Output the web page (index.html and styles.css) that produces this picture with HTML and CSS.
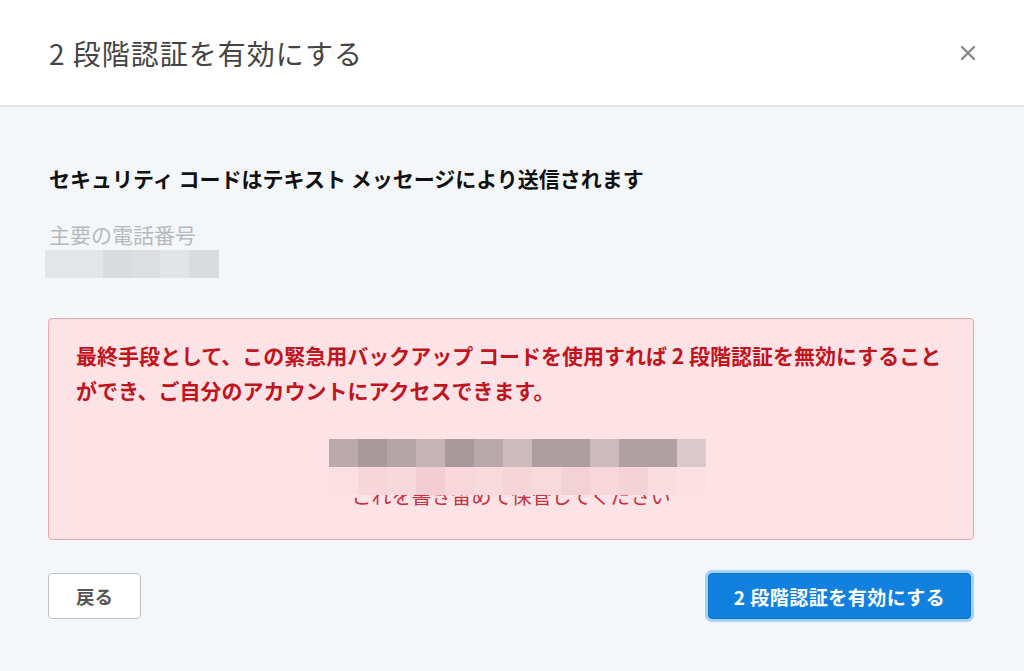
FILE: index.html
```html
<!DOCTYPE html>
<html lang="ja">
<head>
<meta charset="utf-8">
<link rel="stylesheet" href="styles.css">
</head>
<body>
<div class="modal">
  <header class="header">
    <h1 class="title">2 段階認証を有効にする</h1>
    <button class="close" aria-label="閉じる">
      <svg width="16" height="16" viewBox="0 0 16 16"><path d="M2 2L14 14M14 2L2 14" stroke="#858789" stroke-width="2.4" stroke-linecap="round"/></svg>
    </button>
  </header>
  <main class="content">
    <p class="lead">セキュリティ コードはテキスト メッセージにより送信されます</p>
    <p class="label">主要の電話番号</p>
    <div class="phone">
      <span class="pc c1"></span><span class="pc c2"></span><span class="pc c3"></span><span class="pc c4"></span><span class="pc c5"></span>
    </div>
    <div class="alert">
      <p class="alert-text">最終手段として、この緊急用バックアップ コードを使用すれば 2 段階認証を無効にすることができ、ご自分のアカウントにアクセスできます。</p>
      <div class="code">
        <span class="k a1"></span><span class="k a2"></span><span class="k a3"></span><span class="k a4"></span><span class="k a5"></span><span class="k a6"></span><span class="k a7"></span><span class="k a8"></span><span class="k a9"></span><span class="k a10"></span><span class="k a11"></span><span class="k a12"></span><span class="k a13"></span>
        <span class="k b1"></span><span class="k b2"></span><span class="k b3"></span><span class="k b4"></span><span class="k b5"></span><span class="k b6"></span><span class="k b7"></span><span class="k b8"></span><span class="k b9"></span><span class="k b10"></span><span class="k b11"></span><span class="k b12"></span><span class="k b13"></span>
      </div>
      <p class="note">これを書き留めて保管してください</p>
    </div>
    <div class="footer">
      <button class="btn btn-back">戻る</button>
      <button class="btn btn-primary">2 段階認証を有効にする</button>
    </div>
  </main>
</div>
</body>
</html>
```
FILE: styles.css
```css
* { box-sizing: border-box; }
html, body { margin: 0; padding: 0; }
body {
  font-family: "Noto Sans CJK JP", "Noto Sans", sans-serif;
  background: #f4f7fa;
}
.modal {
  width: 1024px;
  height: 671px;
  display: flex;
  flex-direction: column;
  background: #f4f7fa;
}
.header {
  height: 107px;
  flex: none;
  background: #fff;
  border-bottom: 2px solid #e2e5e8;
  display: flex;
  align-items: center;
  justify-content: space-between;
  padding: 0 48px 0 49px;
}
.title {
  margin: 0;
  font-size: 28px;
  font-weight: 400;
  color: #444;
  line-height: 36px;
  letter-spacing: 1px;
}
.close {
  border: 0;
  background: none;
  padding: 0;
  width: 16px;
  height: 16px;
  display: flex;
}
.content {
  flex: 1;
  padding: 0 50px 0 48px;
}
.lead {
  margin: 56px 0 0 1px;
  font-size: 21px;
  line-height: 30px;
  font-weight: 700;
  color: #111;
}
.label {
  margin: 26px 0 0 1px;
  font-size: 21px;
  line-height: 30px;
  color: #b6b9bc;
}
.phone {
  display: flex;
  margin: 1px 0 0 -3px;
  height: 28px;
}
.pc { height: 28px; }
.c1 { width: 58px; background: #e3e5e7; }
.c2 { width: 28px; background: #d9dbdd; }
.c3 { width: 29px; background: #dcdee0; }
.c4 { width: 29px; background: #e2e4e6; }
.c5 { width: 30px; background: #d9dbdd; }
.alert {
  margin-top: 40px;
  background: #fde3e6;
  border: 1px solid #eca6ac;
  border-radius: 4px;
  padding: 19px 27px 26px 27px;
}
.alert-text {
  margin: 0;
  font-size: 21px;
  line-height: 35px;
  font-weight: 700;
  color: #c0141f;
}
.code {
  position: relative;
  z-index: 1;
  margin: 31px 0 0 253px;
  display: grid;
  grid-template-columns: repeat(13, 29px);
  grid-auto-rows: 28px;
  width: 377px;
}
.a1 { background: #bba9ad; } .a2 { background: #a9999c; } .a3 { background: #b5a5a8; }
.a4 { background: #c5b3b6; } .a5 { background: #a8989b; } .a6 { background: #b8a8ab; }
.a7 { background: #ccbabd; } .a8 { background: #ae9ea1; } .a9 { background: #ae9ea1; }
.a10 { background: #ccbabd; } .a11 { background: #b0a0a3; } .a12 { background: #b0a0a3; }
.a13 { background: #dcc8cb; }
.b1 { background: #fbdfe2; } .b2 { background: #f6d6da; } .b3 { background: #f7d8dc; }
.b4 { background: #f3cdd3; } .b5 { background: #f7d7db; } .b6 { background: #f8dadd; }
.b7 { background: #f6d5d9; } .b8 { background: #f8dadd; } .b9 { background: #f3d2d7; }
.b10 { background: #f7d7db; } .b11 { background: #f4d3d8; } .b12 { background: #fadde0; }
.b13 { background: #fce1e4; }
.note {
  margin: -17px 0 0;
  text-align: center;
  font-size: 20px;
  line-height: 35px;
  color: #c8303d;
}
.footer {
  margin-top: 33px;
  display: flex;
  justify-content: space-between;
  align-items: center;
}
.btn {
  font-family: inherit;
  font-weight: 700;
  height: 46px;
  border-radius: 4px;
  line-height: 1;
}
.btn-back {
  width: 93px;
  font-size: 18.5px;
  background: #fff;
  border: 1px solid #bdbfc1;
  color: #555;
}
.btn-primary {
  width: 263px;
  margin-right: 3px;
  font-size: 19px;
  letter-spacing: 0.5px;
  background: #1180df;
  border: 1px solid #0c74cc;
  color: #fff;
  box-shadow: 0 0 0 3px #a5d2fa;
}
```
